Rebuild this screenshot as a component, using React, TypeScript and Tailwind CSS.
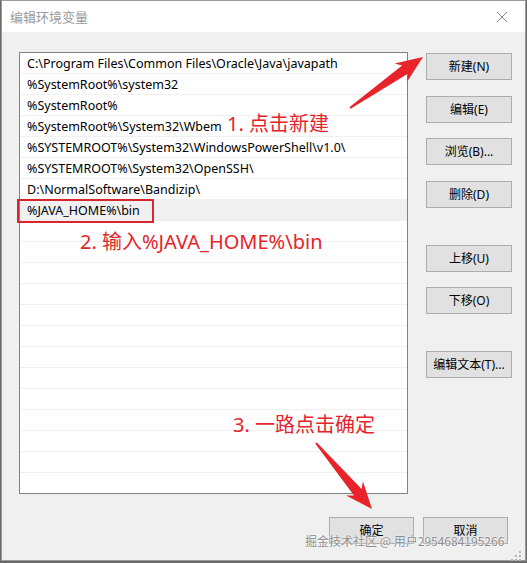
const paths = [
  "C:\\Program Files\\Common Files\\Oracle\\Java\\javapath",
  "%SystemRoot%\\system32",
  "%SystemRoot%",
  "%SystemRoot%\\System32\\Wbem",
  "%SYSTEMROOT%\\System32\\WindowsPowerShell\\v1.0\\",
  "%SYSTEMROOT%\\System32\\OpenSSH\\",
  "D:\\NormalSoftware\\Bandizip\\",
  "%JAVA_HOME%\\bin",
];

const rows = Array.from({ length: 21 }, (_, i) => paths[i] ?? "");

const uiFont = "[font-family:'Noto_Sans','Noto_Sans_CJK_SC',sans-serif]";

function WinButton({ label, className = "" }: { label: string; className?: string }) {
  return (
    <div
      className={`flex h-[27px] items-center justify-center border border-[#adadad] bg-[#e1e1e1] text-[12px] text-black ${uiFont} ${className}`}
    >
      {label}
    </div>
  );
}

// tapered arrow polygon from tail to tip
function arrowPoints(
  tail: [number, number],
  tip: [number, number],
  headLen: number,
  headHalf: number,
  neckHalf: number,
  tailHalf: number
) {
  const dx = tip[0] - tail[0];
  const dy = tip[1] - tail[1];
  const len = Math.hypot(dx, dy);
  const ux = dx / len;
  const uy = dy / len;
  const nx = -uy;
  const ny = ux;
  const bx = tip[0] - ux * headLen;
  const by = tip[1] - uy * headLen;
  const nbx = tip[0] - ux * (headLen - 5);
  const nby = tip[1] - uy * (headLen - 5);
  const p = (x: number, y: number) => `${x.toFixed(1)},${y.toFixed(1)}`;
  return [
    p(tail[0] + nx * tailHalf, tail[1] + ny * tailHalf),
    p(nbx + nx * neckHalf, nby + ny * neckHalf),
    p(bx + nx * headHalf, by + ny * headHalf),
    p(tip[0], tip[1]),
    p(bx - nx * headHalf, by - ny * headHalf),
    p(nbx - nx * neckHalf, nby - ny * neckHalf),
    p(tail[0] - nx * tailHalf, tail[1] - ny * tailHalf),
  ].join(" ");
}

export default function App() {
  return (
    <div className="relative h-[563px] w-[527px] overflow-hidden bg-[#6b6b6b]">
      <div className="ml-[1px] flex h-[561px] w-[525px] flex-col border border-[#9a9a9a] bg-[#f0f0f0]">
        {/* Title bar */}
        <div className="flex h-[31px] shrink-0 items-center justify-between bg-white pl-[8px] pr-[15px]">
          <span className="text-[13px] text-[#9a9a9a] [font-family:'Noto_Sans_CJK_SC',sans-serif]">
            编辑环境变量
          </span>
          <svg width="12" height="12" viewBox="0 0 12 12" className="mr-[2px]">
            <path d="M1 1L11 11M11 1L1 11" stroke="#8a8a8a" strokeWidth="1" />
          </svg>
        </div>

        {/* Body */}
        <div className="flex pl-[17px] pt-[20px]">
          <div className="h-[442px] w-[389px] overflow-hidden border border-[#828282] bg-white">
            {rows.map((t, i) => (
              <div
                key={i}
                className={`flex h-[21px] items-center border-b border-[#f0f0f0] pl-[7px] pt-[2px] text-[12.5px] text-black ${uiFont} ${
                  i === 7 ? "bg-[#f0f0f0]" : ""
                }`}
              >
                {t}
              </div>
            ))}
          </div>
          <div className="ml-[18px] flex w-[86px] flex-col pt-[1px]">
            <WinButton label="新建(N)" />
            <WinButton label="编辑(E)" className="mt-[16px]" />
            <WinButton label="浏览(B)..." className="mt-[15px]" />
            <WinButton label="删除(D)" className="mt-[16px]" />
            <WinButton label="上移(U)" className="mt-[37px]" />
            <WinButton label="下移(O)" className="mt-[15px]" />
            <WinButton label="编辑文本(T)..." className="mt-[37px]" />
          </div>
        </div>

        <div className="flex pl-[327px] pt-[23px]">
          <WinButton label="确定" className="w-[85px]" />
          <WinButton label="取消" className="ml-[9px] w-[85px]" />
        </div>
      </div>

      {/* Annotations */}
      <div className="pointer-events-none absolute left-[17px] top-[199px] h-[24px] w-[137px] border-2 border-[#d7262e]" />
      <div className="absolute left-[227px] top-[110px] text-[20px] leading-[28px] text-[#e3252b] [font-family:'Noto_Sans','Noto_Sans_CJK_SC',sans-serif]">
        1. 点击新建
      </div>
      <div className="absolute left-[80px] top-[228px] text-[20px] leading-[28px] text-[#e3252b] [font-family:'Noto_Sans','Noto_Sans_CJK_SC',sans-serif]">
        2. 输入%JAVA_HOME%\bin
      </div>
      <div className="absolute left-[233px] top-[411px] text-[20px] leading-[28px] text-[#e3252b] [font-family:'Noto_Sans','Noto_Sans_CJK_SC',sans-serif]">
        3. 一路点击确定
      </div>

      <svg className="pointer-events-none absolute left-0 top-0" width="527" height="563">
        <polygon points={arrowPoints([350, 108], [423, 57], 27, 11, 5, 1)} fill="#e8232a" />
        <polygon points={arrowPoints([316, 443], [372, 509], 27, 11, 5, 1)} fill="#e8232a" />
        {/* resize grip */}
        {[
          [519, 553],
          [515, 557],
          [519, 557],
          [511, 561],
          [515, 561],
          [519, 561],
        ].map(([x, y], i) => (
          <rect key={i} x={x} y={y - 2} width="2" height="2" fill="#b5b5b5" />
        ))}
      </svg>

      {/* Watermark */}
      <div className="absolute left-[305px] top-[532px] text-[12px] leading-[18px] text-[#8c8c8c] [font-family:'Noto_Sans_CJK_SC',sans-serif] [text-shadow:0_0_2px_#fff,0_0_1px_#fff]">
        掘金技术社区 @ 用户2954684195266
      </div>
    </div>
  );
}
